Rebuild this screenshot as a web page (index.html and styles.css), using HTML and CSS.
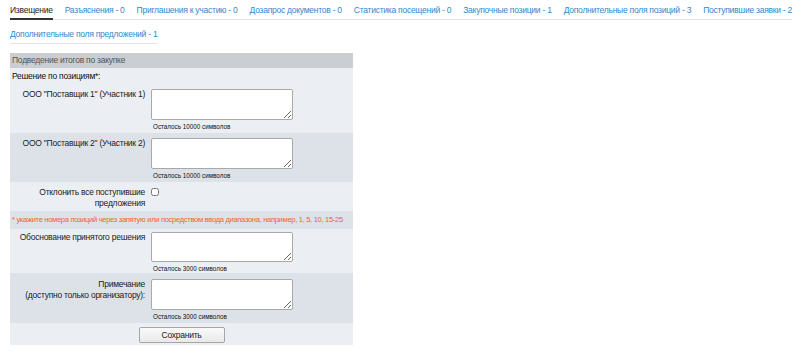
FILE: index.html
```html
<!DOCTYPE html>
<html lang="ru">
<head>
  <meta charset="UTF-8" />
  <meta name="viewport" content="width=device-width, initial-scale=1.0"/>
  <title>Подведение итогов по закупке</title>
  <link rel="stylesheet" href="styles.css">
</head>
<body>

  <ul class="tabs">
    <li class="tab"><a href="#" class="tab-link active">Извещение</a></li>
    <li class="tab"><a href="#" class="tab-link">Разъяснения - 0</a></li>
    <li class="tab"><a href="#" class="tab-link">Приглашения к участию - 0</a></li>
    <li class="tab"><a href="#" class="tab-link">Дозапрос документов - 0</a></li>
    <li class="tab"><a href="#" class="tab-link">Статистика посещений - 0</a></li>
    <li class="tab"><a href="#" class="tab-link">Закупочные позиции - 1</a></li>
    <li class="tab"><a href="#" class="tab-link">Дополнительные поля позиций - 3</a></li>
    <li class="tab tab-end"><a href="#" class="tab-link">Поступившие заявки - 2</a></li>
    <li class="tab tab-end"><a href="#" class="tab-link">Дополнительные поля предложений - 1</a></li>
  </ul>

  <form class="panel">
    <div class="panel-head">Подведение итогов по закупке</div>
    <div class="panel-sub">Решение по позициям*:</div>

    <div class="row">
      <label class="row-label">ООО "Поставщик 1" (Участник 1)</label>
      <div class="row-field">
        <textarea></textarea>
        <div class="counter">Осталось 10000 символов</div>
      </div>
    </div>

    <div class="row dark">
      <label class="row-label">ООО "Поставщик 2" (Участник 2)</label>
      <div class="row-field">
        <textarea></textarea>
        <div class="counter">Осталось 10000 символов</div>
      </div>
    </div>

    <div class="row check-row">
      <label class="row-label">Отклонить все поступившие предложения</label>
      <div class="row-field">
        <input type="checkbox" class="check" />
      </div>
    </div>

    <div class="note dark">* укажите номера позиций через запятую или посредством ввода диапазона, например, 1, 5, 10, 15-25</div>

    <div class="row short">
      <label class="row-label">Обоснование принятого решения</label>
      <div class="row-field">
        <textarea></textarea>
        <div class="counter">Осталось 3000 символов</div>
      </div>
    </div>

    <div class="row dark remark">
      <label class="row-label">Примечание<br>(доступно только организатору):</label>
      <div class="row-field">
        <textarea></textarea>
        <div class="counter">Осталось 3000 символов</div>
      </div>
    </div>

    <div class="actions">
      <button type="button" class="save-btn">Сохранить</button>
    </div>
  </form>

</body>
</html>
```

FILE: styles.css
```css
body {
  margin: 0;
  padding: 0 0 0 10px;
  font-family: "Liberation Sans", Arial, sans-serif;
  font-size: 8.5px;
  letter-spacing: -0.25px;
  background-color: white;
  color: #000;
}

.tabs {
  list-style: none;
  margin: 0;
  padding: 0;
  display: flex;
  flex-wrap: wrap;
  row-gap: 4px;
}

.tab {
  padding: 4px 12px 0 0;
  border-bottom: 1px solid #e2e2e2;
}

.tab-end {
  padding-right: 0;
}

.tab-link {
  display: block;
  line-height: 12px;
  padding-bottom: 3px;
  color: #2f87cf;
  text-decoration: none;
}

.tab-link.active {
  color: #222;
  border-bottom: 2px solid #333;
  margin-bottom: -1px;
  padding-bottom: 2px;
}

.panel {
  width: 343px;
  margin-top: 9px;
  background-color: #ebeef2;
}

.panel-head {
  background-color: #cacdd1;
  color: #555;
  padding: 1px 2px;
  line-height: 13px;
}

.panel-sub {
  padding: 2px 2px 1px;
  line-height: 13px;
  color: #111;
}

.row {
  display: grid;
  grid-template-columns: 141px 1fr;
  padding: 5px 0 2px;
}

.dark {
  background-color: #dde2e8;
}

.row-label {
  text-align: right;
  padding-right: 6px;
  line-height: 11px;
  color: #222;
}

.row-field textarea {
  display: block;
  box-sizing: border-box;
  width: 142px;
  height: 31px;
  margin: 0;
  border: 1px solid #a9a9a9;
  border-radius: 2px;
  background: white;
  resize: vertical;
}

.counter {
  font-size: 6.3px;
  letter-spacing: 0;
  line-height: 9px;
  margin: 2px 0 0 2px;
  color: #111;
}

.check-row {
  padding: 5px 0 2px;
}

.check {
  margin: 1px 0 0;
  width: 8px;
  height: 8px;
}

.short {
  padding: 3px 0 0;
}

.short textarea {
  height: 30px;
}

.remark {
  padding: 6px 0 2px;
}

.note {
  color: #f3622b;
  font-size: 7.6px;
  letter-spacing: -0.33px;
  line-height: 12px;
  padding: 3px 2px;
  white-space: nowrap;
}

.actions {
  display: flex;
  justify-content: center;
  padding: 4px 0 2px;
}

.save-btn {
  width: 86px;
  height: 16px;
  padding: 0;
  font-family: "Liberation Sans", Arial, sans-serif;
  font-size: 8.5px;
  letter-spacing: -0.25px;
  color: #222;
  background: linear-gradient(#fafafa, #e9e9e9);
  border: 1px solid #a6a6a6;
  border-radius: 2px;
}
```
